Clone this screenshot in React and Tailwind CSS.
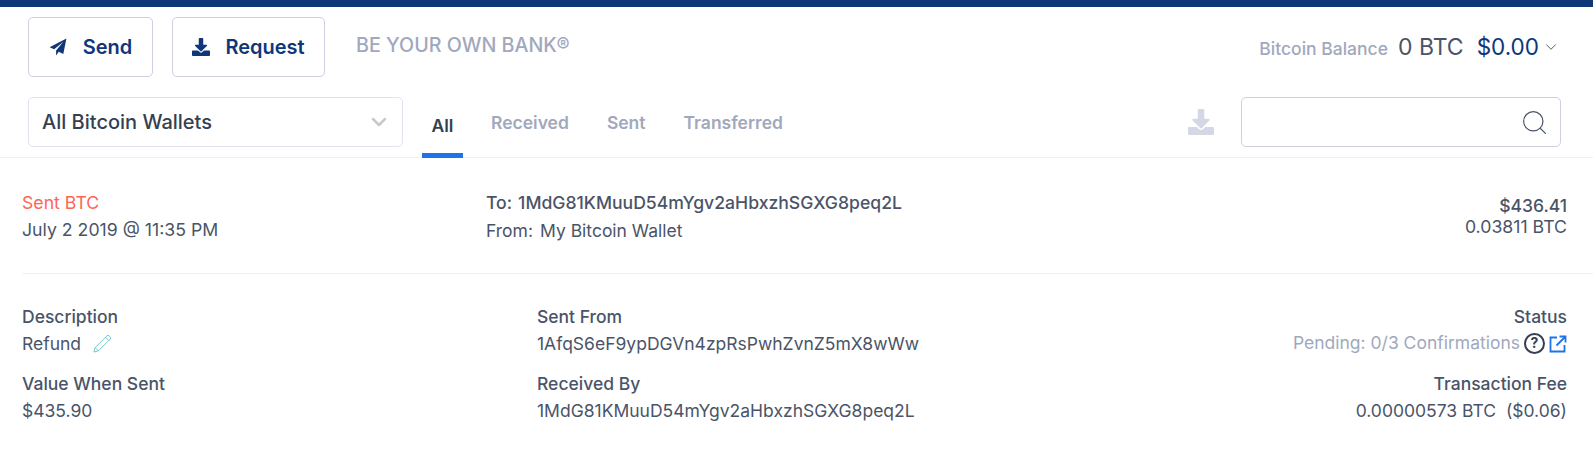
import React from "react";
import { ChevronDown, Search } from "lucide-react";

const DownloadIcon = ({ className }) => (
  <svg viewBox="0 0 512 512" className={className} fill="currentColor">
    <path d="M216 0h80c13.300 0 24 10.700 24 24v168h87.700c17.800 0 26.700 21.500 14.100 34.100L269.700 378.300c-7.500 7.500-19.800 7.500-27.300 0L90.100 226.100c-12.600-12.600-3.700-34.100 14.100-34.100H192V24c0-13.300 10.700-24 24-24zm296 376v112c0 13.300-10.700 24-24 24H24c-13.300 0-24-10.700-24-24V376c0-13.300 10.700-24 24-24h146.700l49 49c20.100 20.100 52.500 20.100 72.600 0l49-49H488c13.300 0 24 10.700 24 24z" />
  </svg>
);

const Plane = ({ className }) => (
  <svg viewBox="0 0 16 16" className={className} fill="currentColor">
    <path d="M15.500 0.500 L0.500 8.200 L4.600 10 L12.800 3.400 L6.300 11 L6.300 15.500 L8.700 12.200 L12.700 14.200 Z" />
  </svg>
);

const Pencil = () => (
  <svg viewBox="0 0 20 20" className="h-[19px] w-[19px] text-[#6cc5c1]" fill="none" stroke="currentColor" strokeWidth="1">
    <path d="M1 19 L2.300 14.300 L14.800 1.800 Q15.800 0.800 16.800 1.800 L18.200 3.200 Q19.200 4.200 18.200 5.200 L5.700 17.700 Z" />
    <path d="M13.200 3.400 L16.600 6.800 M2.300 14.300 L5.700 17.700" />
  </svg>
);

const Help = () => (
  <span className="flex h-[21px] w-[21px] items-center justify-center rounded-full border-2 border-[#353f52] text-[14px] font-bold leading-none text-[#353f52]">?</span>
);

const External = () => (
  <svg viewBox="0 0 18 18" className="mt-[1px] h-[18px] w-[18px] text-[#1f72e8]" fill="none" stroke="currentColor" strokeWidth="1.800">
    <path d="M8 2.500 H1.500 V16.500 H15.500 V10" />
    <path d="M7.500 10.500 L16 2 M10.500 1.500 H16.500 V7.500" />
  </svg>
);

const Label = ({ children }) => <div className="text-[17.5px] font-medium leading-[27px] text-[#4a5468]">{children}</div>;
const Value = ({ children }) => <div className="text-[17.5px] leading-[27px] text-[#4a5468]">{children}</div>;

export default function App() {
  return (
    <div className="h-[450px] overflow-hidden bg-white font-['Inter',sans-serif]">
      <div className="h-[7px] bg-[#10367a]" />

      <div className="flex h-[150.5px] flex-col border-b border-[#eef0f3]">
        <div className="flex items-start justify-between pl-[28px] pr-[33px] pt-[10px]">
          <div className="flex items-center">
            <button className="flex h-[60px] w-[125px] items-center justify-center gap-[16px] rounded-[5px] border border-[#ccd0e0] text-[20px] font-semibold text-[#10367a]">
              <Plane className="h-[18px] w-[18px]" />Send
            </button>
            <button className="ml-[19px] flex h-[60px] w-[153px] items-center justify-center gap-[15px] rounded-[5px] border border-[#ccd0e0] text-[20px] font-semibold text-[#10367a]">
              <DownloadIcon className="h-[18px] w-[18px]" />Request
            </button>
            <span className="mb-[3px] ml-[31px] text-[19.7px] font-medium text-[#a1a8bd]">BE YOUR OWN BANK®</span>
          </div>
          <div className="mt-[13px] flex items-baseline">
            <span className="text-[17.5px] font-medium text-[#a1a8bd]">Bitcoin Balance</span>
            <span className="ml-[10px] text-[23px] text-[#4a5468]">0 BTC</span>
            <span className="ml-[13px] text-[22.5px] text-[#10367a]">$0.00</span>
            <ChevronDown className="ml-[3px] h-[18px] w-[18px] self-center text-[#4a5468]" strokeWidth={1.250} />
          </div>
        </div>

        <div className="mt-[20px] flex flex-1 items-start justify-between pl-[28px] pr-[32px]">
          <div className="flex items-start">
            <div className="flex h-[50px] w-[375px] items-center justify-between rounded-[5px] border border-[#e1e3ec] pl-[13px] pr-[11px] text-[20px] font-medium text-[#353f52]">
              All Bitcoin Wallets
              <ChevronDown className="h-[24px] w-[24px] text-[#c9c9c9]" strokeWidth={2.500} />
            </div>
            <div className="ml-[19px] flex h-[61px] items-start text-[17.5px] font-semibold">
              <div className="flex h-[61px] w-[41px] items-center justify-center border-b-[5px] border-[#1f72e8] pt-[2px] text-[#353f52]">All</div>
              <div className="ml-[28px] pt-[13px] text-[#a1a8bd]">Received</div>
              <div className="ml-[38px] pt-[13px] text-[#a1a8bd]">Sent</div>
              <div className="ml-[38px] pt-[13px] text-[#a1a8bd]">Transferred</div>
            </div>
          </div>
          <div className="flex items-start">
            <DownloadIcon className="mt-[12px] h-[26px] w-[26px] text-[#d3d8e4]" />
            <div className="ml-[27px] flex h-[50px] w-[320px] items-center justify-end rounded-[5px] border border-[#ccd0e0] pr-[11px]">
              <Search className="h-[29px] w-[29px] text-[#4a5468]" strokeWidth={1} />
            </div>
          </div>
        </div>
      </div>

      <div className="ml-[22px] flex h-[116px] items-start justify-between border-b border-[#eef0f3] pr-[26px] pt-[31px]">
        <div className="w-[464px]">
          <div className="text-[17.7px] leading-[27px] text-[#ff6555]">Sent BTC</div>
          <div className="text-[17.7px] leading-[27px] text-[#4a5468]">July 2 2019 @ 11:35 PM</div>
        </div>
        <div className="flex-1">
          <div className="pt-[1px] text-[17.6px] font-medium leading-[26px] text-[#4a5468]">To:<span className="ml-[6px]">1MdG81KMuuD54mYgv2aHbxzhSGXG8peq2L</span></div>
          <div className="text-[17.5px] leading-[29px] text-[#4a5468]">From:<span className="ml-[7px]">My Bitcoin Wallet</span></div>
        </div>
        <div className="pt-[6px] text-right">
          <div className="text-[17.5px] font-medium leading-[21px] text-[#4a5468]">$436.41</div>
          <div className="text-[17.7px] leading-[21px] text-[#4a5468]">0.03811 BTC</div>
        </div>
      </div>

      <div className="ml-[22px] flex justify-between pr-[26px] pt-[29px]">
        <div className="w-[515px]">
          <Label>Description</Label>
          <div className="flex items-center gap-[12px]"><Value>Refund</Value><Pencil /></div>
          <div className="mt-[13px]"><Label>Value When Sent</Label></div>
          <Value>$435.90</Value>
        </div>
        <div className="flex-1">
          <Label>Sent From</Label>
          <Value>1AfqS6eF9ypDGVn4zpRsPwhZvnZ5mX8wWw</Value>
          <div className="mt-[13px]"><Label>Received By</Label></div>
          <Value>1MdG81KMuuD54mYgv2aHbxzhSGXG8peq2L</Value>
        </div>
        <div className="text-right">
          <Label>Status</Label>
          <div className="flex h-[27px] items-center justify-end gap-[4px]">
            <span className="text-[17.5px] text-[#a1a8bd]">Pending: 0/3 Confirmations</span>
            <Help /><External />
          </div>
          <div className="mt-[13px]"><Label>Transaction Fee</Label></div>
          <Value>0.00000573 BTC&nbsp; ($0.06)</Value>
        </div>
      </div>
    </div>
  );
}
